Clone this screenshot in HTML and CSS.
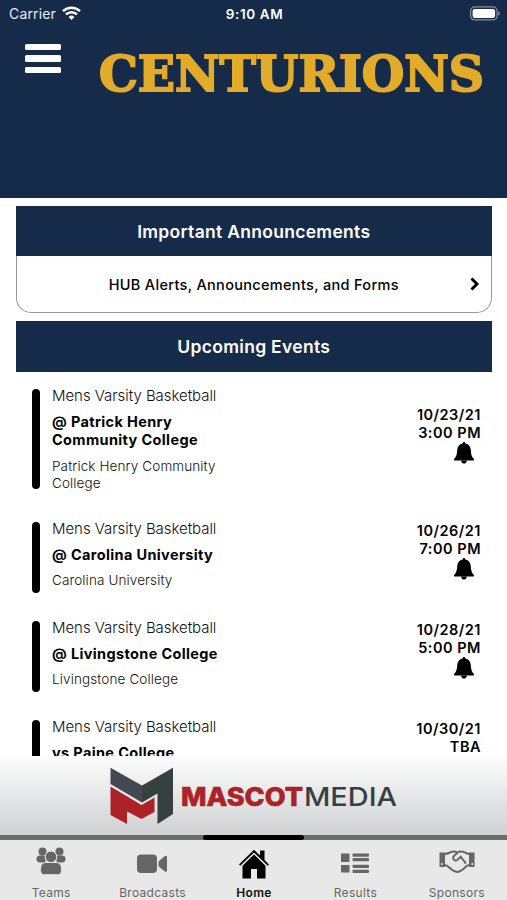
FILE: index.html
```html
<!DOCTYPE html>
<html lang="en">
<head>
<meta charset="utf-8">
<meta name="viewport" content="width=device-width">
<title>Centurions</title>
<link rel="stylesheet" href="styles.css">
</head>
<body>
<svg class="defs" width="0" height="0" aria-hidden="true">
  <symbol id="bell" viewBox="0 0 20 22">
    <path d="M10 0c.9 0 1.300.6 1.300 1.400 3.500.6 5.300 3.200 5.500 6.600.2 4.400.900 6.800 2.900 8.700.8.9.3 1.900-.6 1.900H.9c-.9 0-1.400-1-.6-1.900C2.300 14.800 3 12.400 3.200 8c.2-3.400 2-6 5.500-6.600C8.700.6 9.100 0 10 0z"/>
    <path d="M7.200 18.400h5.600c0 2-1.100 3.200-2.800 3.200s-2.800-1.200-2.800-3.200z"/>
  </symbol>
</svg>
<div class="screen">
  <header class="header">
    <div class="status">
      <div class="carrier"><span>Carrier</span>
        <svg width="19" height="15" viewBox="0 0 19 15" fill="none" stroke="#fff" stroke-width="2.500"><path d="M1 5.200a12.200 12.200 0 0 1 17 0M4 8.400a7.900 7.900 0 0 1 11 0"/><path d="M9.500 14 6.600 11a4.200 4.200 0 0 1 5.800 0z" fill="#fff" stroke="none"/></svg>
      </div>
      <div class="clock">9:10 AM</div>
      <div class="battery"><svg width="31" height="15" viewBox="0 0 31 15"><rect x=".6" y=".9" width="26.500" height="13" rx="4" fill="none" stroke="#8590a3" stroke-width="1.200"/><rect x="2.600" y="2.900" width="22.500" height="9" rx="2.200" fill="#fff"/><path d="M28.300 5.200c2.200.8 2.200 3.600 0 4.400z" fill="#8590a3"/></svg></div>
    </div>
    <div class="brand">
      <div class="burger"><i></i><i></i><i></i></div>
      <svg class="wordmark" width="390" height="60" viewBox="0 0 390 60"><text x="2" y="42.500" textLength="385" lengthAdjust="spacingAndGlyphs">CENTURIONS</text></svg>
    </div>
  </header>

  <main class="content">
    <section class="panel">
      <h2>Important Announcements</h2>
      <div class="link"><span>HUB Alerts, Announcements, and Forms</span>
        <svg width="10" height="14" viewBox="0 0 10 14" fill="none" stroke="#000" stroke-width="2.900"><path d="M1.500 1.500 7 7l-5.500 5.500"/></svg>
      </div>
    </section>
    <section class="events">
      <h2>Upcoming Events</h2>
      <article class="event tall">
        <div class="info"><p class="sport">Mens Varsity Basketball</p><h3>@ Patrick Henry<br>Community College</h3><p class="place">Patrick Henry Community<br>College</p></div>
        <div class="when"><span>10/23/21</span><span>3:00 PM</span><svg><use href="#bell"/></svg></div>
      </article>
      <article class="event">
        <div class="info"><p class="sport">Mens Varsity Basketball</p><h3>@ Carolina University</h3><p class="place">Carolina University</p></div>
        <div class="when"><span>10/26/21</span><span>7:00 PM</span><svg><use href="#bell"/></svg></div>
      </article>
      <article class="event">
        <div class="info"><p class="sport">Mens Varsity Basketball</p><h3>@ Livingstone College</h3><p class="place">Livingstone College</p></div>
        <div class="when"><span>10/28/21</span><span>5:00 PM</span><svg><use href="#bell"/></svg></div>
      </article>
      <article class="event">
        <div class="info"><p class="sport">Mens Varsity Basketball</p><h3>vs Paine College</h3></div>
        <div class="when"><span>10/30/21</span><span>TBA</span><svg><use href="#bell"/></svg></div>
      </article>
    </section>
  </main>

  <aside class="sponsor">
    <svg width="64" height="58" viewBox="0 0 64 58">
      <path fill="#424952" d="M.5.800 32 18.500V35.500L.5 17z"/>
      <path fill="#374041" d="M32 18.500 63 .800V47L47.500 57V26.500L32 35.500z"/>
      <path fill="#ab2327" d="M.5 19.500 31.500 38 44.500 30.500V45L31.500 52 17 44.500V57L.5 48z"/>
    </svg>
    <svg width="220" height="32" viewBox="0 0 220 32"><text class="mascot" x="0" y="26" textLength="122" lengthAdjust="spacingAndGlyphs">MASCOT</text><text class="media" x="123" y="26" textLength="93" lengthAdjust="spacingAndGlyphs">MEDIA</text></svg>
  </aside>

  <nav class="tabs">
    <div class="tab">
      <svg width="30" height="28" viewBox="0 0 30 28"><circle cx="6.500" cy="4.500" r="4"/><circle cx="23.500" cy="4.500" r="4"/><path d="M3.500 8.500h6v7H4C1.500 15.500.5 14 .5 12s1-3.500 3-3.500zM20.500 8.500h6c2 0 3 1.500 3 3.500s-1 3.500-3.500 3.500h-5.500z"/><circle class="cut" cx="15" cy="9.800" r="5.800"/><path class="cut" d="M10 15.500h10c4 0 5.500 3 5.500 7s-1.500 5.200-4 5.200h-13c-2.500 0-4-1.200-4-5.200s1.500-7 5.500-7z"/></svg>
      <span>Teams</span>
    </div>
    <div class="tab">
      <svg width="31" height="28" viewBox="0 0 31 28"><rect x="0" y="7.500" width="20" height="18.500" rx="4"/><path d="M21.500 14.500 27.500 9.200c1.300-1 2.500-.5 2.500 1v13c0 1.500-1.200 2-2.500 1l-6-5z"/></svg>
      <span>Broadcasts</span>
    </div>
    <div class="tab active">
      <svg width="30" height="30" viewBox="0 0 30 30"><path d="M15 .8 21 6.600V1.500h4.500v9.600L30 15.600l-1.200 1.200L15 3.500 1.200 16.800 0 15.600z"/><path d="M15 5.600 26.500 16.800V29.500H18V20h-6v9.500H3.500V16.800z"/></svg>
      <span>Home</span>
    </div>
    <div class="tab">
      <svg width="28" height="28" viewBox="0 0 28 28"><g transform="translate(0 2.500)"><path d="M0 4h8.500v8.500H0zM0 15.500h8.500V23H0z"/><rect x="11.500" y="4" width="16.500" height="3.200" rx="1"/><rect x="11.500" y="8.600" width="16.500" height="3.200" rx="1"/><rect x="11.500" y="15.200" width="16.500" height="3.200" rx="1"/><rect x="11.500" y="20.200" width="16.500" height="3.200" rx="1"/></g></svg>
      <span>Results</span>
    </div>
    <div class="tab">
      <svg width="36" height="28" viewBox="0 0 36 28"><path class="hand" d="M6 7c3.500-.3 5.500-2.500 9-2.500 1.300 0 2.300.3 3.500 1 1.200-.7 2.200-1 3.500-1 3.500 0 4.500 2.200 8 2.500M6 18c2.500.2 4 2.200 6 4s4 3 6.200 3c2.800 0 5-2 6.800-3.500 2-1.700 2.500-3.300 5-3.500M19 5.300l-3.800 3.500c-2.500 2.500.3 6.200 3.300 4l3.200-3c1.500 2.500 4.300 4.500 5 7"/><path d="M.5 5.500H6V20H.5zM30 5.500h5.500V20H30z"/><path fill="#e8e8e8" d="M2 16h1.500v2H2zM32.500 16H34v2h-1.500z"/></svg>
      <span>Sponsors</span>
    </div>
  </nav>
</div>
</body>
</html>
```

FILE: styles.css
```css
* { box-sizing: border-box; }
body { margin: 0; background: #fff; font-family: Inter, sans-serif; color: #000; }
h2, h3, p { margin: 0; }
.defs { display: block; height: 0; }
.screen { width: 507px; height: 900px; display: flex; flex-direction: column; overflow: hidden; }

.header { flex: none; height: 198px; background: #162b4a; color: #fff; }
.status { height: 28px; display: grid; grid-template-columns: 1fr auto 1fr; align-items: center; padding: 0 6px 0 9px; font-size: 14px; }
.carrier { display: flex; align-items: center; gap: 6px; color: #e6ebf2; letter-spacing: .15px; }
.carrier svg { margin-top: -2px; }
.carrier span { margin-top: -1px; }
.clock { font-weight: 600; font-size: 13.5px; letter-spacing: .6px; margin-left: -2px; margin-right: -1px; }
.battery { display: flex; justify-content: flex-end; margin-top: -2px; }
.brand { display: flex; align-items: flex-start; padding: 15.500px 0 0 25px; }
.burger { width: 36px; display: flex; flex-direction: column; gap: 5px; margin-right: 36px; }
.burger i { height: 6.500px; background: #fff; border-radius: 1.500px; }
.wordmark { margin-top: 4px; }
.wordmark text { font: bold 48px "DejaVu Serif", serif; fill: #e2ab29; stroke: #e2ab29; stroke-width: 2px; }

.content { flex: 1; min-height: 0; overflow: hidden; padding: 8px 15.500px 0 16px; }
h2 { height: 50px; background: #162b4a; color: #fff; display: flex; align-items: center; justify-content: center; font-size: 17.500px; font-weight: 600; letter-spacing: .3px; }
.link { height: 57px; border: 1px solid #999; border-top: 0; border-radius: 0 0 15px 15px; display: grid; grid-template-columns: 1fr 10px; align-items: center; padding: 0 11px 0 21px; font-size: 14.500px; font-weight: 500; letter-spacing: .32px; text-align: center; }
.events { margin-top: 8px; }
.events h2 { height: 51px; margin-bottom: 17px; }

.event { display: flex; justify-content: space-between; height: 71.500px; margin: 0 10.500px 27.500px 16px; }
.event.tall { height: 99.500px; margin-bottom: 33px; }
.info { padding-left: 20px; position: relative; }
.info::before { content: ""; position: absolute; left: 0; top: 0; bottom: 0; width: 8px; border-radius: 4px; background: #000; }
.sport { font-size: 15px; line-height: 18px; font-weight: 300; letter-spacing: -.05px; color: #111; margin-top: -2px; }
h3 { font-size: 14.500px; line-height: 18px; font-weight: 700; letter-spacing: .36px; margin-top: 8px; }
.place { font-size: 13.500px; line-height: 17px; font-weight: 300; letter-spacing: .12px; color: #111; margin-top: 8.500px; }
.when { display: flex; flex-direction: column; align-items: flex-end; font-size: 14.500px; line-height: 18px; font-weight: 600; letter-spacing: .5px; }
.tall .when { padding-top: 16.500px; }
.when svg { width: 20px; height: 22px; margin: 0 7px 0 0; }

.sponsor { flex: none; height: 79px; background: linear-gradient(#fdfdfd, #cfd1d2); display: flex; align-items: center; gap: 7px; padding-left: 110px; }
.mascot { font: 800 26px Inter, sans-serif; fill: #ab2327; stroke: #ab2327; stroke-width: .6px; }
.media { font: 500 26px Inter, sans-serif; fill: #374041; }

.tabs { flex: none; height: 65px; display: grid; grid-template-columns: repeat(5, 1fr); background: #e8e8e8; }
.tab { border-top: 5px solid #6b6d6d; display: flex; flex-direction: column; align-items: center; color: #666; fill: #666; font-size: 12px; letter-spacing: .3px; position: relative; padding-left: 1px; }
.tab svg { margin-top: 7px; height: 28px; }
.tab span { margin-top: 10px; line-height: 15px; }
.tab.active { color: #111; fill: #000; font-weight: 600; }
.tab.active svg { height: 30px; margin-top: 9px; }
.tab.active span { margin-top: 6px; }
.tab.active::before { content: ""; position: absolute; top: -5px; left: 0; right: 0; height: 5px; border-radius: 2.500px; background: #000; }
.cut { stroke: #e8e8e8; stroke-width: 1; }
.hand { fill: none; stroke: #666; stroke-width: 2; }
```
